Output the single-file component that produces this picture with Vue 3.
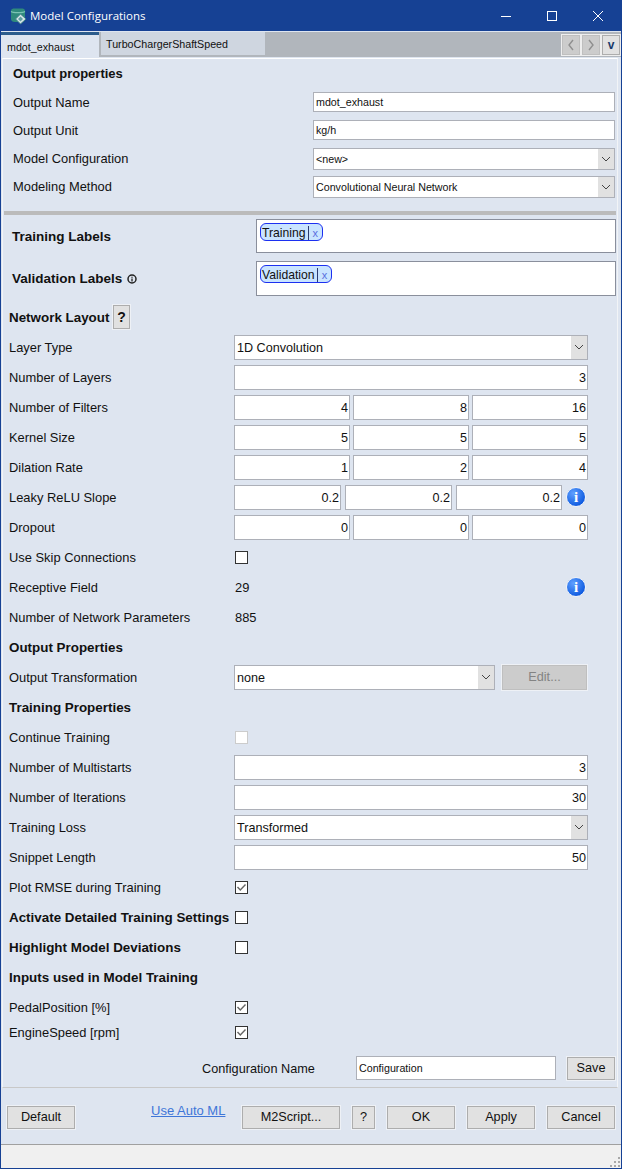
<script setup>
const head = [
  { label: 'Output Name', value: 'mdot_exhaust' },
  { label: 'Output Unit', value: 'kg/h' },
  { label: 'Model Configuration', value: '<new>', select: true },
  { label: 'Modeling Method', value: 'Convolutional Neural Network', select: true },
]
const triple = [
  { label: 'Number of Filters', values: [4, 8, 16] },
  { label: 'Kernel Size', values: [5, 5, 5] },
  { label: 'Dilation Rate', values: [1, 2, 4] },
]
const training = [
  { label: 'Number of Multistarts', value: '3' },
  { label: 'Number of Iterations', value: '30' },
]
</script>

<template>
  <div class="window">
    <header class="titlebar">
      <svg class="appicon" width="17" height="18" viewBox="0 0 17 18">
        <path d="M1 4C1 2 2.500 1.500 5 1.500H11C13.500 1.500 15 2 15 4V12C15 14.500 13 15 11 15H5C2.500 15 1 14 1 12Z" fill="#2f8a7c" />
        <path d="M1 4.500C3 6 13 6 15 4.500" fill="none" stroke="#7cc4b4" stroke-width="1.200" />
        <path d="M10.500 7L16 12L10.500 17L5.500 12Z" fill="#d8e6e8" stroke="#3b7f86" />
        <path d="M8 12L10.500 9.500L13 12L10.500 14.500Z" fill="#5f9ea3" />
      </svg>
      <span class="wintitle">Model Configurations</span>
      <div class="wincontrols">
        <svg width="12" height="12" viewBox="0 0 12 12"><path d="M1 6.500H11" stroke="#fff" /></svg>
        <svg width="12" height="12" viewBox="0 0 12 12"><rect x="1.500" y="1.500" width="9" height="9" fill="none" stroke="#fff" /></svg>
        <svg width="12" height="12" viewBox="0 0 12 12"><path d="M1 1L11 11M11 1L1 11" stroke="#fff" /></svg>
      </div>
    </header>

    <nav class="tabbar">
      <div class="tab active">mdot_exhaust</div>
      <div class="tab">TurboChargerShaftSpeed</div>
      <div class="tabnav">
        <button class="navbtn off">
          <svg width="8" height="12" viewBox="0 0 8 12"><path d="M6 1L2 6L6 11" fill="none" stroke="#8f8f8f" stroke-width="1.400" /></svg>
        </button>
        <button class="navbtn off">
          <svg width="8" height="12" viewBox="0 0 8 12"><path d="M2 1L6 6L2 11" fill="none" stroke="#8f8f8f" stroke-width="1.400" /></svg>
        </button>
        <button class="navbtn">v</button>
      </div>
    </nav>

    <main class="panel">
      <section class="top">
        <h3 class="toptitle">Output properties</h3>
        <div v-for="r in head" :key="r.label" class="toprow">
          <span class="toplabel">{{ r.label }}</span>
          <div class="field small" :class="{ sel: r.select }">
            <span class="fieldtext">{{ r.value }}</span>
            <span v-if="r.select" class="arrow">
              <svg width="10" height="6" viewBox="0 0 10 6"><path d="M1 1L5 5L9 1" fill="none" stroke="#444" /></svg>
            </span>
          </div>
        </div>
      </section>

      <div class="separator"></div>

      <section class="labels">
        <div class="labelrow">
          <span class="biglabel">Training Labels</span>
          <div class="tagbox"><span class="tag"><span>Training</span><i class="caret"></i><span class="x">x</span></span></div>
        </div>
        <div class="labelrow">
          <span class="biglabel">Validation Labels
            <svg class="mini" width="10" height="10" viewBox="0 0 10 10"><circle cx="5" cy="5" r="4" fill="none" stroke="#222" stroke-width="1.500" /><path d="M5 2.800V3.800M5 4.500V7.500" stroke="#222" stroke-width="1.300" /></svg>
          </span>
          <div class="tagbox"><span class="tag"><span>Validation</span><i class="caret"></i><span class="x">x</span></span></div>
        </div>
      </section>

      <section class="form">
        <div class="row">
          <strong class="heading">Network Layout</strong>
          <button class="btn help">?</button>
        </div>
        <div class="row">
          <span class="name">Layer Type</span>
          <div class="field"><span class="fieldtext">1D Convolution</span><span class="arrow"><svg width="10" height="6" viewBox="0 0 10 6"><path d="M1 1L5 5L9 1" fill="none" stroke="#444" /></svg></span></div>
        </div>
        <div class="row">
          <span class="name">Number of Layers</span>
          <div class="field num">3</div>
        </div>
        <div v-for="r in triple" :key="r.label" class="row">
          <span class="name">{{ r.label }}</span>
          <div class="cols">
            <div v-for="(v, i) in r.values" :key="i" class="field num">{{ v }}</div>
          </div>
        </div>
        <div class="row">
          <span class="name">Leaky ReLU Slope</span>
          <div class="cols leaky">
            <div class="field num">0.2</div>
            <div class="field num">0.2</div>
            <div class="field num">0.2</div>
            <span class="info">i</span>
          </div>
        </div>
        <div class="row">
          <span class="name">Dropout</span>
          <div class="cols">
            <div class="field num">0</div>
            <div class="field num">0</div>
            <div class="field num">0</div>
          </div>
        </div>
        <div class="row">
          <span class="name">Use Skip Connections</span>
          <span class="check"></span>
        </div>
        <div class="row">
          <span class="name">Receptive Field</span>
          <div class="valueline"><span>29</span><span class="info">i</span></div>
        </div>
        <div class="row">
          <span class="name">Number of Network Parameters</span>
          <span class="plain">885</span>
        </div>

        <div class="row"><strong class="heading">Output Properties</strong></div>
        <div class="row">
          <span class="name">Output Transformation</span>
          <div class="transform">
            <div class="field"><span class="fieldtext">none</span><span class="arrow"><svg width="10" height="6" viewBox="0 0 10 6"><path d="M1 1L5 5L9 1" fill="none" stroke="#444" /></svg></span></div>
            <button class="btn edit">Edit...</button>
          </div>
        </div>

        <div class="row"><strong class="heading">Training Properties</strong></div>
        <div class="row">
          <span class="name">Continue Training</span>
          <span class="check disabled"></span>
        </div>
        <div v-for="r in training" :key="r.label" class="row">
          <span class="name">{{ r.label }}</span>
          <div class="field num">{{ r.value }}</div>
        </div>
        <div class="row">
          <span class="name">Training Loss</span>
          <div class="field"><span class="fieldtext">Transformed</span><span class="arrow"><svg width="10" height="6" viewBox="0 0 10 6"><path d="M1 1L5 5L9 1" fill="none" stroke="#444" /></svg></span></div>
        </div>
        <div class="row">
          <span class="name">Snippet Length</span>
          <div class="field num">50</div>
        </div>
        <div class="row">
          <span class="name">Plot RMSE during Training</span>
          <span class="check"><svg width="11" height="11" viewBox="0 0 11 11"><path d="M1.500 5L4.300 8L9.500 2.500" fill="none" stroke="#666" stroke-width="1.400" /></svg></span>
        </div>
        <div class="row">
          <strong class="heading">Activate Detailed Training Settings</strong>
          <span class="check"></span>
        </div>
        <div class="row">
          <strong class="heading">Highlight Model Deviations</strong>
          <span class="check"></span>
        </div>
        <div class="row"><strong class="heading">Inputs used in Model Training</strong></div>
        <div class="row">
          <span class="name">PedalPosition [%]</span>
          <span class="check"><svg width="11" height="11" viewBox="0 0 11 11"><path d="M1.500 5L4.300 8L9.500 2.500" fill="none" stroke="#666" stroke-width="1.400" /></svg></span>
        </div>
        <div class="row tight">
          <span class="name">EngineSpeed [rpm]</span>
          <span class="check"><svg width="11" height="11" viewBox="0 0 11 11"><path d="M1.500 5L4.300 8L9.500 2.500" fill="none" stroke="#666" stroke-width="1.400" /></svg></span>
        </div>
      </section>

      <div class="saveline">
        <span class="savelabel">Configuration Name</span>
        <div class="field small config"><span class="fieldtext">Configuration</span></div>
        <button class="btn save">Save</button>
      </div>
    </main>

    <footer class="actions">
      <button class="btn wide first">Default</button>
      <a class="automl">Use Auto ML</a>
      <button class="btn script">M2Script...</button>
      <button class="btn q">?</button>
      <button class="btn wide">OK</button>
      <button class="btn wide">Apply</button>
      <button class="btn wide">Cancel</button>
    </footer>

    <div class="status">
      <svg class="grip" width="11" height="11" viewBox="0 0 11 11" fill="#a8a8a8">
        <rect x="8" y="0" width="2" height="2" /><rect x="4" y="4" width="2" height="2" /><rect x="8" y="4" width="2" height="2" />
        <rect x="0" y="8" width="2" height="2" /><rect x="4" y="8" width="2" height="2" /><rect x="8" y="8" width="2" height="2" />
      </svg>
    </div>
  </div>
</template>

<style scoped>
.window {
  width: 622px;
  height: 1169px;
  box-sizing: border-box;
  display: flex;
  flex-direction: column;
  background: #dee5f0;
  border: 1px solid #164194;
  border-top: 0;
  font-family: "Liberation Sans", Arial, sans-serif;
  font-size: 12.900px;
  color: #111;
  overflow: hidden;
}
.titlebar {
  height: 31px;
  flex: none;
  background: #164194;
  color: #fff;
  display: flex;
  align-items: center;
  padding-left: 9px;
}
.appicon { margin-right: 3px; }
.wintitle { font-family: "Open Sans", sans-serif; font-size: 11.500px; }
.wincontrols {
  margin-left: auto;
  display: flex;
  gap: 34px;
  padding-right: 17px;
}
.tabbar {
  height: 25px;
  flex: none;
  margin-top: 1px;
  background: #b1b6bc;
  display: flex;
  align-items: flex-start;
  margin-bottom: 1px;
}
.tab {
  width: 164px;
  height: 23px;
  box-sizing: border-box;
  background: #cfd6e0;
  font-size: 10.700px;
  line-height: 21px;
  padding: 2px 0 0 5px;
  margin-left: 2px;
}
.tab.active {
  width: 98px;
  height: 25px;
  margin-left: 0;
  background: #dee5f0;
  border-top: 3px solid #2c5c8c;
  line-height: 24px;
  padding: 0 0 0 6px;
}
.tabnav {
  margin-left: auto;
  display: flex;
  gap: 2px;
  padding: 3px 1px 0 0;
}
.navbtn {
  width: 18px;
  height: 20px;
  box-sizing: border-box;
  padding: 0;
  background: #e1e1e1;
  border: 1px solid #adadad;
  outline: 1px solid #eee;
  font: bold 12px "Liberation Sans", sans-serif;
  color: #1a3a6a;
  display: flex;
  align-items: center;
  justify-content: center;
}
.navbtn.off { background: #cccccc; border-color: #bfbfbf; }
.panel {
  flex: none;
  height: 1030px;
  margin: 0 3px 0 1px;
  border: 1px solid #f2f4f7;
  border-top-color: #fff;
  border-bottom-color: #c8c8c8;
  box-sizing: border-box;
  display: flex;
  flex-direction: column;
}
.top { padding: 1px 0 0 10px; }
.toptitle { margin: 0; height: 28px; line-height: 28px; font-size: 13px; font-weight: bold; }
.toprow {
  height: 28px;
  display: grid;
  grid-template-columns: 300px 302px;
  align-items: center;
}
.separator { height: 4px; background: #bbbbbb; margin: 11px 1px 0 1px; }
.labels { padding: 4px 0 0 9px; }
.labelrow {
  display: grid;
  grid-template-columns: 244px 360px;
  height: 42px;
  font-weight: bold;
  font-size: 13.500px;
}
.biglabel { line-height: 36px; white-space: nowrap; }
.mini { vertical-align: -1px; margin-left: 1px; }
.tagbox {
  height: 34px;
  box-sizing: border-box;
  background: #fff;
  border: 1px solid #8a8f9c;
  padding: 3px;
  font-weight: normal;
}
.labelrow:nth-child(2) .tagbox { height: 35px; }
.tag {
  display: inline-flex;
  align-items: center;
  height: 18px;
  padding: 1px 4px 0 1px;
  box-sizing: border-box;
  background: #c9e4ff;
  border: 1px solid #1c30f0;
  border-radius: 6px;
  font-size: 12.200px;
  line-height: 16px;
  color: #111;
}
.caret { width: 1px; height: 14px; background: #2a3a70; margin: 0 4px 0 2px; }
.x { color: #5a6fe0; font-size: 11px; }
.form { padding: 0 0 0 6px; margin-top: -1px; }
.row {
  height: 30px;
  display: grid;
  grid-template-columns: 225px 354px;
  align-items: center;
}
.row.tight { margin-top: -5px; }
.row > :first-child { white-space: nowrap; }
.heading { font-weight: bold; font-size: 13.400px; }
.field {
  height: 25px;
  box-sizing: border-box;
  background: #fff;
  border: 1px solid #adb0b8;
  display: flex;
  align-items: center;
  overflow: hidden;
  line-height: 1;
  font-size: 12.600px;
}
.field.small { height: 20px; font-size: 10.700px; }
.field.sel { height: 22px; margin-top: 2px; }
.fieldtext { padding: 2px 0 0 2px; flex: 1; white-space: nowrap; }
.field.small .fieldtext { padding-top: 1px; }
.num { justify-content: flex-end; padding: 2px 1px 0 0; }
.arrow {
  width: 16px;
  height: 100%;
  background: #e1e1e1;
  display: flex;
  align-items: center;
  justify-content: center;
}
.cols { display: grid; grid-template-columns: 116px 116px 116px; gap: 3px; }
.cols.leaky { grid-template-columns: 107px 107px 106px 20px; column-gap: 4px; align-items: center; }
.plain { padding-left: 1px; }
.info {
  width: 20px;
  height: 20px;
  border-radius: 50%;
  box-sizing: border-box;
  border: 1px solid #eef2f8;
  background: radial-gradient(circle at 35% 30%, #5fa0ff, #0f5be0 75%);
  color: #fff;
  font: bold 15px/18px "Liberation Serif", serif;
  text-align: center;
}
.valueline { display: flex; justify-content: space-between; padding: 0 2px 0 1px; align-items: center; }
.check {
  width: 13px;
  height: 13px;
  margin-left: 1px;
  box-sizing: border-box;
  background: #fff;
  border: 1px solid #333;
  display: flex;
  align-items: center;
  justify-content: center;
}
.check.disabled { border-color: #ccc; }
.transform { display: grid; grid-template-columns: 261px 85px; gap: 7px; align-items: center; }
.btn {
  background: #e1e1e1;
  border: 1px solid #adadad;
  outline: 1px solid #eef1f6;
  padding: 0;
  font: 12.700px "Liberation Sans", Arial, sans-serif;
  color: #111;
  height: 23px;
  flex: none;
}
.form .row:first-child { grid-template-columns: 104px 30px; }
.btn.help { width: 17px; height: 24px; font-weight: bold; font-size: 14px; }
.btn.edit { height: 25px; background: #cccccc; border-color: #bfbfbf; color: #838383; }
.saveline {
  display: flex;
  align-items: center;
  margin-top: auto;
  height: 38px;
}
.savelabel { margin: 1px 0 0 199px; width: 154px; font-size: 12.700px; }
.field.config { width: 200px; height: 24px; flex: none; }
.btn.save { margin-left: 11px; width: 48px; height: 23px; }
.actions {
  flex: none;
  height: 56px;
  display: flex;
  align-items: center;
  padding-left: 6px;
  box-sizing: border-box;
}
.actions .btn { margin-top: 2px; margin-right: 12px; }
.actions .btn.first { margin-right: 0; }
.actions .btn:last-child { margin-right: 0; }
.btn.wide { width: 68px; }
.automl {
  margin-left: 76px;
  width: 91px;
  flex: none;
  color: #3f76d8;
  text-decoration: underline;
  margin-top: -11px;
  white-space: nowrap;
  font-size: 13px;
}
.btn.script { width: 98px; }
.btn.q { width: 23px; }
.status {
  flex: 1;
  background: #f0f0f0;
  border-top: 1px solid #a0a0a0;
  position: relative;
}
.grip { position: absolute; right: 0; bottom: 0; }
</style>
